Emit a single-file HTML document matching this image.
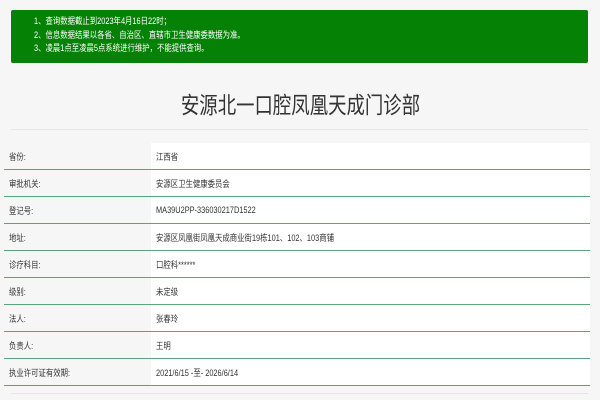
<!DOCTYPE html>
<html><head><meta charset="utf-8"><style>
html,body{margin:0;padding:0;width:600px;height:400px;overflow:hidden;background:#f6f6f6;font-family:"Liberation Sans","Noto Sans CJK SC",sans-serif;color:#333}
.notice{position:absolute;left:11px;top:10px;width:577px;height:53px;background:#058205;border-radius:2px;color:#fff;font-size:9px;line-height:13.5px;box-sizing:border-box;padding:5px 0 0 23px}
.c{display:inline-block;transform:scaleX(0.82);transform-origin:left center;white-space:nowrap}
h1{position:absolute;left:0;right:0;top:90px;margin:0;text-align:center;font-size:23px;font-weight:normal;color:#333;line-height:30px}
h1 span{display:inline-block;transform:scaleX(0.8)}
.hr{position:absolute;left:11px;width:577px;height:1px;background:#e6e6e6}
table{position:absolute;left:4px;top:143px;width:586px;border-collapse:collapse;font-size:9px}
td{height:26px;border-bottom:1px solid #5aa577;padding:0;vertical-align:middle}
td.l{width:147px;padding-left:5px;box-sizing:border-box}
td.v{background:#fff;padding-left:5px}
td span{display:inline-block;transform:scaleX(0.82);transform-origin:left center;white-space:nowrap}
</style></head><body>
<div class="notice"><span class="c">1、查询数据截止到2023年4月16日22时；</span><br><span class="c">2、信息数据结果以各省、自治区、直辖市卫生健康委数据为准。</span><br><span class="c">3、凌晨1点至凌晨5点系统进行维护，不能提供查询。</span></div>
<h1><span>安源北一口腔凤凰天成门诊部</span></h1>
<div class="hr" style="top:129px"></div>
<table>
<tr><td class="l"><span>省份:</span></td><td class="v"><span>江西省</span></td></tr>
<tr><td class="l"><span>审批机关:</span></td><td class="v"><span>安源区卫生健康委员会</span></td></tr>
<tr><td class="l"><span>登记号:</span></td><td class="v"><span>MA39U2PP-336030217D1522</span></td></tr>
<tr><td class="l"><span>地址:</span></td><td class="v"><span>安源区凤凰街凤凰天成商业街19栋101、102、103商铺</span></td></tr>
<tr><td class="l"><span>诊疗科目:</span></td><td class="v"><span>口腔科******</span></td></tr>
<tr><td class="l"><span>级别:</span></td><td class="v"><span>未定级</span></td></tr>
<tr><td class="l"><span>法人:</span></td><td class="v"><span>张春玲</span></td></tr>
<tr><td class="l"><span>负责人:</span></td><td class="v"><span>王明</span></td></tr>
<tr><td class="l"><span>执业许可证有效期:</span></td><td class="v"><span>2021/6/15 -至- 2026/6/14</span></td></tr>
</table>
<div class="hr" style="top:393px"></div>
</body></html>
